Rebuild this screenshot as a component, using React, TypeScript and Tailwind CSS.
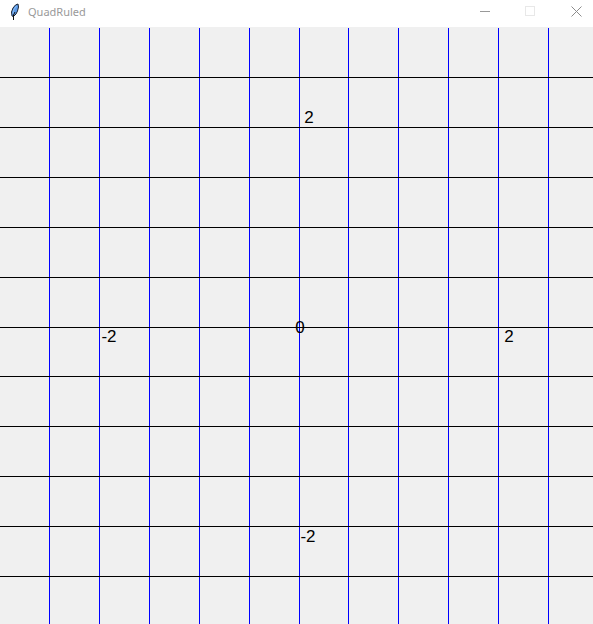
const verticals = [49, 99, 149, 199, 249, 299, 348, 398, 448, 498, 548];
const horizontals = [49, 99, 149, 199, 249, 299, 348, 398, 448, 498, 548];

const labels = [
  { text: "2", x: 309, y: 95 },
  { text: "0", x: 300, y: 305 },
  { text: "-2", x: 109, y: 314 },
  { text: "2", x: 509, y: 314 },
  { text: "-2", x: 308, y: 514 },
];

function Feather() {
  return (
    <svg width="12" height="18" viewBox="0 0 12 18" aria-hidden="true">
      <path
        d="M3 13 L2.5 9 L4 5 L6.5 2 L9 1 L9.5 4 L8.5 8 L7 11 L4.5 13.5 Z"
        fill="#5b9bea"
        stroke="#1c2434"
        strokeWidth="1"
      />
      <path d="M4 11 L4.5 7 L7.5 3" fill="none" stroke="#8fbff5" strokeWidth="1" />
      <path d="M4.5 17 L4.5 12 L6 9" fill="none" stroke="#111111" strokeWidth="1" />
    </svg>
  );
}

function TitleBar() {
  return (
    <header className="flex h-[27px] shrink-0 items-start bg-white">
      <div className="flex h-6 flex-1 items-center gap-[7px] pl-[9px]">
        <Feather />
        <h1 className="font-['Noto_Sans','Open_Sans',sans-serif] text-[11px] text-[#999999]">QuadRuled</h1>
      </div>
      <div className="flex h-[22px]">
        <button type="button" aria-label="Minimize" className="flex w-[45px] items-center justify-center">
          <svg width="11" height="11" shapeRendering="crispEdges">
            <path d="M0 5.5H10" stroke="#999999" />
          </svg>
        </button>
        <button type="button" aria-label="Maximize" disabled className="flex w-[45px] items-center justify-center">
          <svg width="11" height="11" shapeRendering="crispEdges">
            <rect x="0.5" y="0.5" width="9" height="9" fill="none" stroke="#e8e8e8" />
          </svg>
        </button>
        <button type="button" aria-label="Close" className="flex w-10 items-center justify-end pr-[11px]">
          <svg width="11" height="11">
            <path d="M0.5 0.5L10.5 10.5M10.5 0.5L0.5 10.5" stroke="#8c8c8c" />
          </svg>
        </button>
      </div>
    </header>
  );
}

function Grid() {
  return (
    <svg className="block w-full flex-1" role="img" aria-label="Coordinate grid">
      <g stroke="#0000ff" shapeRendering="crispEdges">
        {verticals.map((x) => (
          <line key={x} x1={x + 0.5} x2={x + 0.5} y1="0" y2="100%" />
        ))}
      </g>
      <g stroke="#000000" shapeRendering="crispEdges">
        {horizontals.map((y) => (
          <line key={y} x1="0" x2="100%" y1={y + 0.5} y2={y + 0.5} />
        ))}
      </g>
      <g fill="#000000" textAnchor="middle" className="font-['Liberation_Sans',Arial,sans-serif] text-[17px]">
        {labels.map((label) => (
          <text key={`${label.x}:${label.y}`} x={label.x} y={label.y}>
            {label.text}
          </text>
        ))}
      </g>
    </svg>
  );
}

export default function App() {
  return (
    <div className="flex min-h-screen flex-col bg-[#f0f0f0]">
      <TitleBar />
      <main className="flex flex-1 flex-col pt-px">
        <Grid />
      </main>
    </div>
  );
}
